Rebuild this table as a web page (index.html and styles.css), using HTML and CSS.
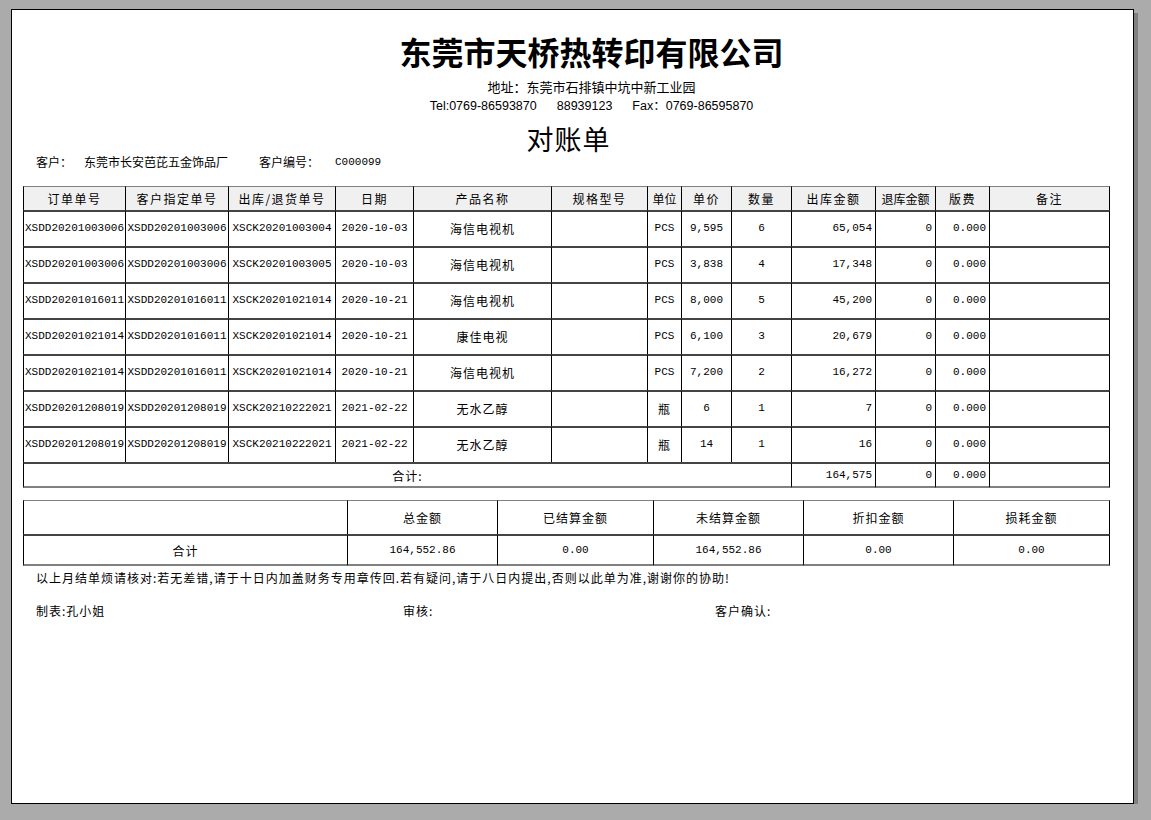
FILE: index.html
```html
<!DOCTYPE html>
<html lang="zh-CN">
<head>
<meta charset="utf-8">
<title>对账单</title>
<link rel="stylesheet" href="styles.css">
</head>
<body>
<div class="sheet">
  <div class="company">
    <div class="title">东莞市天桥热转印有限公司</div>
    <div class="addr">地址：东莞市石排镇中坑中新工业园</div>
    <div class="tel"><span>Tel:0769-86593870</span><span class="gap">88939123</span><span class="gap">Fax<span class="cjk">：</span>0769-86595870</span></div>
  </div>
  <div class="doc-title">对账单</div>
  <div class="customer">
    <span class="c-label">客户：</span>
    <span class="c-name">东莞市长安芭芘五金饰品厂</span>
    <span class="c-label2">客户编号：</span>
    <span class="c-code">C000099</span>
  </div>

  <table class="detail">
    <colgroup>
      <col style="width:102px"><col style="width:103px"><col style="width:107px"><col style="width:78px">
      <col style="width:138px"><col style="width:96px"><col style="width:34px"><col style="width:50px">
      <col style="width:60px"><col style="width:84px"><col style="width:60px"><col style="width:54px"><col style="width:121px">
    </colgroup>
    <thead>
      <tr>
        <th>订单单号</th><th>客户指定单号</th><th>出库/退货单号</th><th>日期</th><th>产品名称</th><th>规格型号</th>
        <th class="tight">单位</th><th>单价</th><th>数量</th><th>出库金额</th><th class="tight">退库金额</th><th>版费</th><th>备注</th>
      </tr>
    </thead>
    <tbody>
      <tr><td>XSDD20201003006</td><td>XSDD20201003006</td><td>XSCK20201003004</td><td>2020-10-03</td><td class="c">海信电视机</td><td></td><td>PCS</td><td>9,595</td><td>6</td><td class="r">65,054</td><td class="r">0</td><td class="r">0.000</td><td></td></tr>
      <tr><td>XSDD20201003006</td><td>XSDD20201003006</td><td>XSCK20201003005</td><td>2020-10-03</td><td class="c">海信电视机</td><td></td><td>PCS</td><td>3,838</td><td>4</td><td class="r">17,348</td><td class="r">0</td><td class="r">0.000</td><td></td></tr>
      <tr><td>XSDD20201016011</td><td>XSDD20201016011</td><td>XSCK20201021014</td><td>2020-10-21</td><td class="c">海信电视机</td><td></td><td>PCS</td><td>8,000</td><td>5</td><td class="r">45,200</td><td class="r">0</td><td class="r">0.000</td><td></td></tr>
      <tr><td>XSDD20201021014</td><td>XSDD20201016011</td><td>XSCK20201021014</td><td>2020-10-21</td><td class="c">康佳电视</td><td></td><td>PCS</td><td>6,100</td><td>3</td><td class="r">20,679</td><td class="r">0</td><td class="r">0.000</td><td></td></tr>
      <tr><td>XSDD20201021014</td><td>XSDD20201016011</td><td>XSCK20201021014</td><td>2020-10-21</td><td class="c">海信电视机</td><td></td><td>PCS</td><td>7,200</td><td>2</td><td class="r">16,272</td><td class="r">0</td><td class="r">0.000</td><td></td></tr>
      <tr><td>XSDD20201208019</td><td>XSDD20201208019</td><td>XSCK20210222021</td><td>2021-02-22</td><td class="c">无水乙醇</td><td></td><td class="c">瓶</td><td>6</td><td>1</td><td class="r">7</td><td class="r">0</td><td class="r">0.000</td><td></td></tr>
      <tr><td>XSDD20201208019</td><td>XSDD20201208019</td><td>XSCK20210222021</td><td>2021-02-22</td><td class="c">无水乙醇</td><td></td><td class="c">瓶</td><td>14</td><td>1</td><td class="r">16</td><td class="r">0</td><td class="r">0.000</td><td></td></tr>
      <tr class="total"><td colspan="9" class="c">合计:</td><td class="r">164,575</td><td class="r">0</td><td class="r">0.000</td><td></td></tr>
    </tbody>
  </table>

  <table class="summary">
    <colgroup>
      <col style="width:324px"><col style="width:150px"><col style="width:156px"><col style="width:150px"><col style="width:150px"><col style="width:157px">
    </colgroup>
    <thead>
      <tr><th></th><th>总金额</th><th>已结算金额</th><th>未结算金额</th><th>折扣金额</th><th>损耗金额</th></tr>
    </thead>
    <tbody>
      <tr><td class="c">合计</td><td>164,552.86</td><td>0.00</td><td>164,552.86</td><td>0.00</td><td>0.00</td></tr>
    </tbody>
  </table>

  <p class="note">以上月结单烦请核对:若无差错,请于十日内加盖财务专用章传回.若有疑问,请于八日内提出,否则以此单为准,谢谢你的协助!</p>
  <div class="signs">
    <span class="s1">制表:孔小姐</span>
    <span class="s2">审核:</span>
    <span class="s3">客户确认:</span>
  </div>
</div>
</body>
</html>
```
FILE: styles.css
```css
html, body {
  margin: 0;
  padding: 0;
}
body {
  background: #ababab;
  font-family: "Noto Sans CJK SC", sans-serif;
  color: #000;
}
.sheet {
  margin: 9px 0 0 11px;
  width: 1121px;
  height: 793px;
  background: #fff;
  border: 1px solid #000;
  box-shadow: 4px 4px 0 #808080;
  overflow: hidden;
}
.company {
  padding-left: 38px;
  text-align: center;
}
.title {
  margin-top: 23px;
  font-size: 32px;
  font-weight: 700;
  line-height: 36px;
}
.addr {
  margin-top: 9px;
  font-size: 13px;
  line-height: 18px;
}
.tel {
  font-family: "Liberation Sans", "Noto Sans CJK SC", sans-serif;
  font-size: 12.5px;
  line-height: 18px;
}
.tel .gap {
  margin-left: 20px;
}
.tel .cjk {
  font-family: "Noto Sans CJK SC", sans-serif;
}
.doc-title {
  margin-top: 9px;
  padding-right: 8px;
  text-align: center;
  font-size: 27px;
  line-height: 30px;
  letter-spacing: 1px;
}
.customer {
  display: flex;
  padding-left: 24px;
  font-size: 12px;
  line-height: 16px;
}
.c-label { width: 48px; }
.c-name { width: 175px; }
.c-label2 { width: 76px; }
.c-code {
  font-family: "Liberation Mono", monospace;
  font-size: 11px;
}

table {
  border-collapse: separate;
  border-spacing: 0;
  table-layout: fixed;
  width: 1087px;
  margin-left: 11px;
}
th, td {
  padding: 0;
  white-space: nowrap;
  overflow: visible;
  text-align: center;
  vertical-align: middle;
  border-left: 1px solid #000;
}
th:last-child, td:last-child {
  border-right: 1px solid #000;
}
th {
  font-weight: normal;
  font-size: 12px;
  letter-spacing: 1.5px;
  border-top: 1px solid #808080;
}
td {
  font-family: "Liberation Mono", monospace;
  font-size: 11px;
  border-top: 2px solid #444;
}
td.c {
  font-family: "Noto Sans CJK SC", sans-serif;
  font-size: 12px;
  letter-spacing: 1px;
}
td.r {
  text-align: right;
  padding-right: 3px;
}
th.tight {
  letter-spacing: 0;
}

.detail {
  margin-top: 16px;
}
.detail thead tr { height: 24px; }
.detail thead th { background: #f0f0f0; }
.detail tbody tr { height: 36px; }
.detail tbody td { padding-bottom: 2px; }
.detail tbody tr.total { height: 26px; }
.detail tbody tr.total td {
  border-bottom: 2px solid #808080;
  padding-bottom: 0;
}

.summary {
  margin-top: 12px;
}
.summary thead tr { height: 34px; }
.summary thead th { letter-spacing: 1px; }
.summary tbody tr { height: 32px; }
.summary tbody td {
  border-bottom: 2px solid #808080;
}

.note {
  margin: 4px 0 0 0;
  padding-left: 24px;
  font-size: 12px;
  letter-spacing: 1px;
  line-height: 16px;
}
.signs {
  display: flex;
  margin-top: 17px;
  padding-left: 24px;
  font-size: 12px;
  letter-spacing: 1px;
  line-height: 16px;
}
.s1 { width: 367px; }
.s2 { width: 312px; }
```
